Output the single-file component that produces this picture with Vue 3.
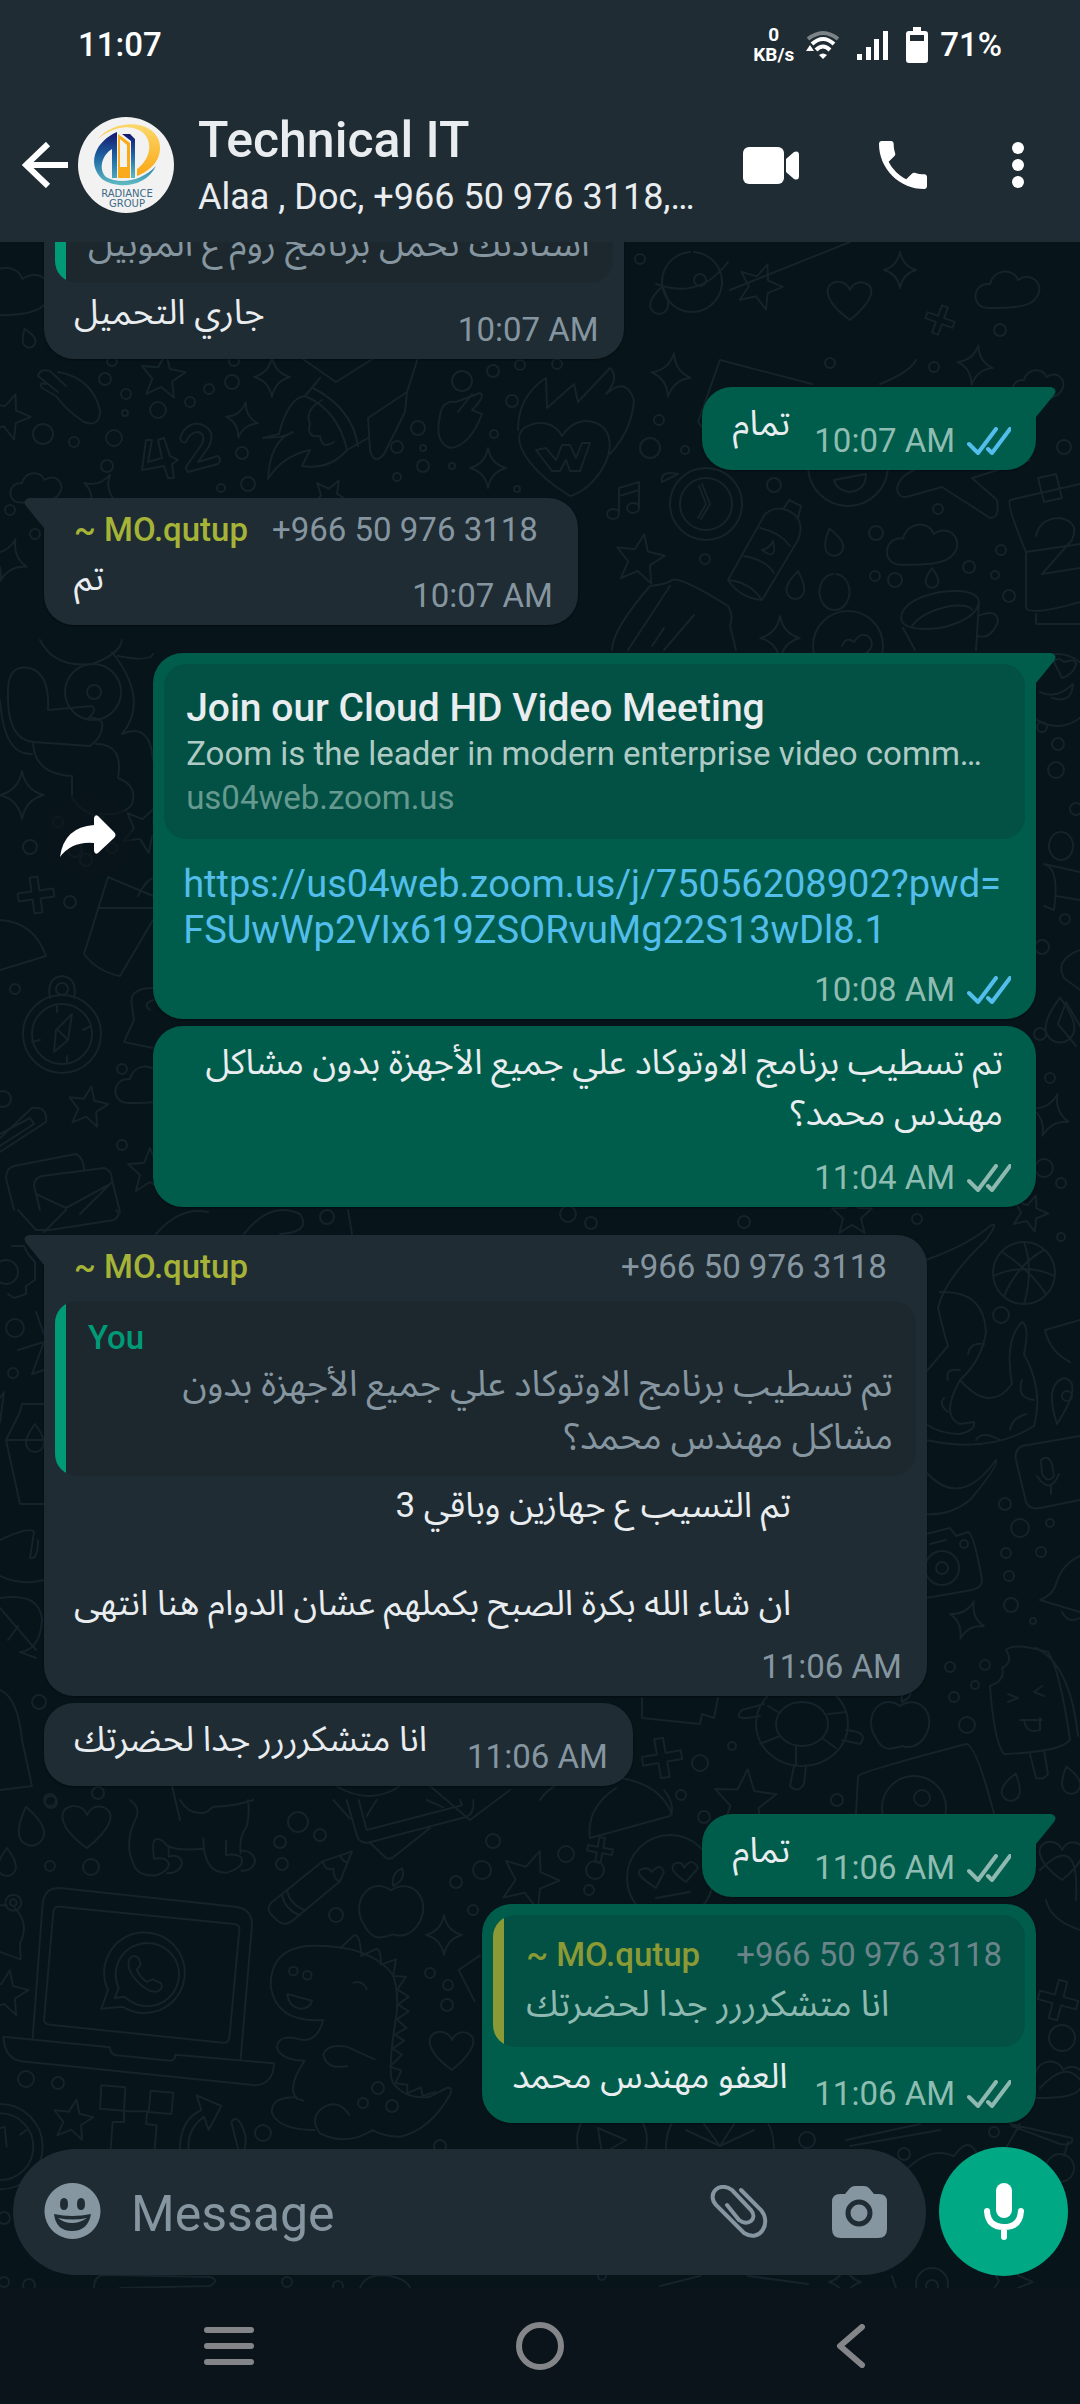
<!-- App.vue -->
<script setup>
import { ref } from 'vue'

const draft = ref('')

const contact = { name: '~ MO.qutup', phone: '+966 50 976 3118' }

const messages = [
  {
    id: 1,
    quote: { accent: 'green', lines: 'استاذنك تحمل برنامج زوم ع الموبيل' },
    text: ['جاري التحميل'],
    time: '10:07 AM'
  },
  { id: 2, out: true, first: true, text: ['تمام'], time: '10:07 AM', ticks: 'read' },
  { id: 3, first: true, sender: contact, text: ['تم'], time: '10:07 AM' },
  {
    id: 4,
    out: true,
    first: true,
    long: true,
    forward: true,
    preview: {
      title: 'Join our Cloud HD Video Meeting',
      description: 'Zoom is the leader in modern enterprise video comm…',
      host: 'us04web.zoom.us'
    },
    link: ['https://us04web.zoom.us/j/75056208902?pwd=', 'FSUwWp2VIx619ZSORvuMg22S13wDl8.1'],
    time: '10:08 AM',
    ticks: 'read'
  },
  {
    id: 5,
    out: true,
    long: true,
    text: ['تم تسطيب برنامج الاوتوكاد علي جميع الأجهزة بدون مشاكل مهندس محمد؟'],
    time: '11:04 AM',
    ticks: 'sent'
  },
  {
    id: 6,
    first: true,
    long: true,
    sender: contact,
    quote: {
      accent: 'green',
      title: 'You',
      lines: 'تم تسطيب برنامج الاوتوكاد علي جميع الأجهزة بدون مشاكل مهندس محمد؟'
    },
    text: ['تم التسيب ع جهازين وباقي 3', '', 'ان شاء الله بكرة الصبح بكملهم عشان الدوام هنا انتهى'],
    time: '11:06 AM'
  },
  { id: 7, text: ['انا متشكرررر جدا لحضرتك'], time: '11:06 AM' },
  { id: 8, out: true, first: true, text: ['تمام'], time: '11:06 AM', ticks: 'sent' },
  {
    id: 9,
    out: true,
    quote: { accent: 'lime', contact, lines: 'انا متشكرررر جدا لحضرتك' },
    text: ['العفو مهندس محمد'],
    time: '11:06 AM',
    ticks: 'sent'
  }
]

// Wallpaper: small repeated shapes, drawn around their own origin
const shapes = {
  star: 'M0-22 6-7 22-6 10 5 14 21 0 12-14 21-10 5-22-6-6-7Z',
  sparkle: 'M0-20Q3-4 18 0 3 4 0 20-3 4-18 0-3-4 0-20Z',
  heart: 'M0 20C-28 0-26-16-14-18-6-19-1-14 0-10 3-16 8-19 15-17 27-12 22 2 0 20Z',
  drop: 'M0-14C6-6 9 0 9 5A9 9 0 0 1-9 5C-9 0-6-6 0-14Z',
  plus: 'M-4-18h8v14h14v8H4v14h-8V4h-14v-8h14Z',
  cloud: 'M-22 18C-40 18-38-8-20-6-16-22 4-22 8-10 22-20 36-4 26 8 20 18-2 18-22 18Z',
  note: 'M-6 14V-12L14-18V8M-6-4 14-10M-6 14a6 5 0 1 1-6-5q4 0 6 2M14 8a6 5 0 1 1-6-5q4 0 6 2',
  apple: 'M0-16C-20-30-38-4-24 16-16 32-6 26 2 24 18 30 34 10 28-8 22-22 8-22 0-16ZM2-20Q0-32 10-36 14-26 2-20Z'
}

const doodles = [
  ['cloud', 12, 292, 1.3, 0], ['drop', 28, 338, 0.7, -20], ['star', 163, 375, 1, 8], ['sparkle', 272, 377, 1, 0],
  ['sparkle', 242, 420, 0.9, 12], ['sparkle', 488, 468, 1, 0], ['star', 8, 415, 1, 20], ['cloud', 38, 488, 0.8, 0],
  ['sparkle', 100, 492, 1, 30], ['star', 330, 496, 0.8, 30], ['note', 625, 500, 1, 0], ['star', 640, 558, 1.1, 10],
  ['sparkle', 671, 375, 1.1, 8], ['drop', 833, 542, 1, -15], ['drop', 796, 585, 1, 8], ['drop', 932, 578, 0.7, 0],
  ['cloud', 925, 545, 1.1, 0], ['sparkle', 780, 638, 1.1, 0], ['sparkle', 975, 365, 1, 10], ['cloud', 1040, 385, 0.8, 0],
  ['sparkle', 8, 560, 1.1, 20], ['heart', 850, 300, 1, 0], ['star', 760, 285, 1, 20],
  ['sparkle', 900, 270, 0.9, 0], ['cloud', 1010, 290, 1, 0], ['drop', 660, 300, 1, 10], ['plus', 940, 320, 0.8, 20],
  ['sparkle', 22, 795, 1.2, 0], ['plus', 36, 895, 1, -8], ['star', 88, 1106, 0.9, 10], ['star', 150, 1170, 1, 0],
  ['star', 145, 828, 1, 25], ['cloud', 150, 1085, 1, 0], ['sparkle', 1050, 1115, 1.1, 20], ['drop', 1060, 1020, 1.6, 0],
  ['sparkle', 967, 1620, 1, 20], ['drop', 1012, 1787, 1, 15], ['drop', 1070, 1780, 1, -15], ['plus', 662, 1758, 1.1, -10],
  ['star', 745, 1800, 1.4, 5], ['apple', 900, 1722, 1, 0], ['star', 852, 1214, 0.9, 0], ['star', 1030, 1212, 0.8, 20],
  ['heart', 1062, 1860, 1, 0], ['plus', 1058, 2000, 1.1, 15], ['cloud', 1055, 2080, 1, 0], ['star', 530, 1878, 1.3, 20],
  ['sparkle', 444, 1935, 1, 0], ['heart', 87, 1826, 1.1, 0], ['drop', 30, 1826, 1.4, -12], ['drop', 7, 1862, 1, 0],
  ['apple', 391, 1908, 1.1, 0], ['heart', 452, 2050, 1, 0], ['star', 73, 2119, 0.9, 10], ['star', 6, 1992, 1, 10],
  ['drop', 35, 1438, 1, 0], ['plus', 600, 1850, 0.7, 10], ['sparkle', 845, 2282, 0.9, 0], ['star', 1010, 2280, 1, 20]
]

const dots = [
  [105, 379, 6], [126, 394, 5], [158, 410, 8], [190, 402, 5], [209, 389, 5], [232, 382, 7], [125, 413, 3], [43, 434, 10],
  [74, 442, 5], [114, 438, 8], [107, 466, 6], [242, 453, 6], [248, 484, 7], [221, 488, 4], [112, 361, 5], [234, 361, 5],
  [462, 381, 10], [493, 371, 6], [520, 365, 5], [557, 364, 5], [512, 401, 6], [418, 428, 7], [397, 447, 6], [423, 448, 3],
  [423, 466, 6], [452, 466, 3], [397, 477, 4], [494, 434, 4], [517, 489, 3], [659, 420, 5], [650, 448, 10], [685, 450, 4],
  [774, 485, 7], [876, 533, 7], [1001, 550, 5], [969, 567, 6], [895, 580, 7], [875, 576, 5], [995, 575, 4], [1009, 596, 6],
  [705, 559, 5], [938, 509, 5], [1064, 447, 7], [640, 259, 5], [830, 363, 5], [934, 367, 5], [700, 280, 6], [1000, 330, 6],
  [35, 534, 5], [10, 510, 5], [30, 847, 7], [58, 822, 5], [75, 850, 7], [112, 848, 5], [86, 860, 6], [70, 902, 6],
  [15, 989, 5], [122, 1069, 5], [122, 1145, 5], [3, 1099, 8], [1042, 727, 5], [1058, 744, 6], [1056, 770, 8], [1076, 809, 6],
  [1065, 919, 5], [1042, 947, 7], [1040, 1034, 6], [1050, 1078, 5], [1044, 1168, 9], [1061, 1183, 5], [15, 1328, 9], [13, 1373, 5],
  [39, 1702, 7], [50, 1800, 6], [98, 1793, 6], [327, 1217, 7], [568, 1214, 8], [591, 1223, 6], [744, 1222, 6], [917, 1219, 5],
  [1001, 1315, 8], [1005, 1504, 6], [1020, 1528, 9], [1050, 1523, 4], [1006, 1553, 5], [1041, 1552, 5], [1009, 1576, 5],
  [1011, 1605, 7], [1033, 1621, 3], [950, 1667, 5], [985, 1665, 5], [975, 1685, 4], [954, 1697, 5], [967, 1725, 8], [732, 1746, 4],
  [700, 1763, 8], [681, 1795, 5], [837, 1800, 6], [1061, 1237, 4], [493, 1841, 7], [566, 1854, 8], [482, 1870, 9], [456, 1882, 6],
  [595, 1870, 9], [589, 1890, 5], [473, 1910, 5], [704, 1817, 6], [448, 1985, 5], [447, 2005, 6], [298, 1822, 10], [280, 1842, 6],
  [320, 1835, 6], [282, 1864, 6], [336, 1915, 7], [50, 1866, 5], [91, 1867, 8], [51, 1802, 6], [26, 2079, 8], [58, 2083, 6],
  [263, 2133, 8], [430, 1973, 5], [378, 2088, 6], [363, 2103, 5], [392, 2106, 6], [1062, 2038, 13], [807, 2140, 8], [904, 2154, 6],
  [994, 2132, 5], [4, 2218, 6], [4, 2282, 5], [29, 2285, 6], [287, 2282, 5], [338, 2286, 5], [440, 2146, 6], [602, 2276, 4]
]
</script>

<template>
  <div class="screen">
    <header class="top">
      <div class="status">
        <span class="clock">11:07</span>
        <div class="status-icons">
          <span class="rate">0<br>KB/s</span>
          <svg width="34" height="30" viewBox="0 0 34 30" fill="none" stroke="#fff" stroke-width="4">
            <path d="M2 9Q17-3 32 9" stroke="#7b8388" />
            <path d="M6 14Q17 4 28 14" />
            <path d="M10 20Q17 13 24 20" />
            <path d="M17 29 13 25Q17 22 21 25ZM0 21 4 15 8 21Z" fill="#fff" stroke="none" />
          </svg>
          <svg class="signal" width="32" height="29" viewBox="0 0 32 29" fill="#fff">
            <path d="M0 23h5v6H0ZM9 16h5v13H9ZM17 8h5v21h-5ZM26 0h5v29h-5Z" />
          </svg>
          <svg class="battery" width="22" height="36" viewBox="0 0 22 36" fill="#fff" fill-rule="evenodd">
            <path d="M7 0h8v4h4q3 0 3 3v26q0 3-3 3H3q-3 0-3-3V7q0-3 3-3h4ZM4 8v6h14V8Z" />
          </svg>
          <span class="clock">71%</span>
        </div>
      </div>
      <div class="toolbar">
        <button class="icon-btn" aria-label="Back">
          <svg width="46" height="46" viewBox="0 0 46 46" fill="none" stroke="#fff" stroke-width="6">
            <path d="M46 23H5M26 2 4 23 26 44" />
          </svg>
        </button>
        <svg class="avatar" width="96" height="96" viewBox="0 0 96 96">
          <defs>
            <linearGradient id="blue" x1="0" y1="0" x2="0" y2="1">
              <stop offset="0" stop-color="#14166e" />
              <stop offset="0.5" stop-color="#1f6aa5" />
              <stop offset="1" stop-color="#5fbcc2" />
            </linearGradient>
            <linearGradient id="gold" x1="0" y1="0" x2="0" y2="1">
              <stop offset="0" stop-color="#fbd86a" />
              <stop offset="1" stop-color="#fba714" />
            </linearGradient>
          </defs>
          <circle cx="48" cy="48" r="48" fill="#f2f2f2" />
          <path d="M20 22C36 2 74 2 81 24 86 42 72 54 59 59V52C70 44 75 30 68 19 58 6 36 8 20 22Z" fill="url(#gold)" />
          <path d="M39 15 39 61H34V32C24 38 20 52 28 60 42 68 64 64 78 49 68 70 40 73 24 62 8 46 18 24 39 15Z" fill="url(#blue)" />
          <path d="M44 17 52 17 57 22V61H53V24Z" fill="url(#blue)" />
          <path d="M40 17 52 26V61H40ZM42 22V50H49V28Z" fill="#f9ab1c" fill-rule="evenodd" />
          <text x="49" y="80" text-anchor="middle" class="logo-text">RADIANCE</text>
          <text x="49" y="90" text-anchor="middle" class="logo-text">GROUP</text>
        </svg>
        <div class="titles">
          <h1>Technical IT</h1>
          <p>Alaa , Doc, +966 50 976 3118,…</p>
        </div>
        <button class="icon-btn video" aria-label="Video call">
          <svg width="56" height="37" viewBox="0 0 56 37" fill="#fff">
            <rect width="41" height="37" rx="6" />
            <path d="M43 12 51 5Q56 3 56 8V29Q56 34 51 32L43 25Z" />
          </svg>
        </button>
        <button class="icon-btn call" aria-label="Voice call">
          <svg width="48" height="48" viewBox="3 3 18 18" fill="#fff">
            <path d="M6.62 10.79c1.44 2.83 3.76 5.14 6.59 6.59l2.2-2.2c.27-.27.67-.36 1.02-.24 1.12.37 2.33.57 3.57.57.55 0 1 .45 1 1V20c0 .55-.45 1-1 1C10.6 21 3 13.4 3 4c0-.55.45-1 1-1h3.5c.55 0 1 .45 1 1 0 1.25.2 2.45.57 3.57.11.35.03.74-.25 1.02Z" />
          </svg>
        </button>
        <button class="icon-btn" aria-label="More options">
          <svg width="12" height="46" viewBox="0 0 12 46" fill="#fff">
            <circle cx="6" cy="6" r="6" /><circle cx="6" cy="23" r="6" /><circle cx="6" cy="40" r="6" />
          </svg>
        </button>
      </div>
    </header>

    <main class="chat">
      <svg class="wallpaper" viewBox="0 242 1080 2046" preserveAspectRatio="xMidYMin slice" aria-hidden="true">
        <path
          v-for="([kind, x, y, size, turn], i) in doodles"
          :key="kind + i"
          :d="shapes[kind]"
          :transform="`translate(${x} ${y}) rotate(${turn}) scale(${size})`"
        />
        <circle v-for="([x, y, r], i) in dots" :key="i" :cx="x" :cy="y" :r="r" />

        <!-- hand, number, rocket, second hand, burning heart -->
        <path d="M38 376 58 392M50 371 66 386M38 376Q40 368 50 371M58 372Q92 378 100 410 100 428 84 422 66 410 56 396L42 388M42 388Q38 382 46 384" />
        <path d="M146 440 142 470 164 466 168 478H174L172 464 178 460 170 456 164 438 158 440 162 458 148 462 152 440ZM180 438Q186 422 200 424 218 430 208 448L198 462 218 456Q222 460 218 464L188 472Q184 468 188 464L202 444Q206 434 198 432 190 432 186 442 182 444 180 438Z" />
        <path d="M455 242 407 392M300 357 336 382 390 348M320 378 305 396M313 388Q352 408 358 446M305 396Q338 410 347 450L368 438M305 396Q288 398 279 434L263 438Q284 438 293 432 270 440 268 479 282 456 310 450L302 466Q330 470 347 450M322 400Q304 410 310 424 306 438 320 436 322 450 334 442M368 418 407 392 405 412 384 454Q374 466 370 450Z" />
        <path d="M440 416Q442 400 456 402L480 393Q486 396 472 410L482 414Q470 446 450 448 434 442 440 416ZM458 412 472 394" />
        <path d="M518 430Q518 396 546 378L547 408 574 384 578 402 610 368Q620 378 606 394 626 376 634 400 632 430 610 454M570 496C528 470 510 440 524 428 540 418 556 424 562 436 572 420 590 416 604 428 622 450 594 490 570 496ZM536 450 552 471H560L566 460 570 471H580L590 443H582L576 458 570 445H562L556 460 546 448Z" />
        <!-- planet, moon and paper at the top -->
        <path d="M690 252a30 30 0 1 0 4 0M656 284Q700 300 728 262M730 290 850 242M812 384 720 360 698 422 712 440M880 384Q910 372 916 360" />
        <!-- wall clock, smileys, plane, bottle -->
        <circle cx="706" cy="504" r="36" /><circle cx="706" cy="504" r="26" />
        <path d="M699 486 706 504 698 518M702 484 710 504 701 519M662 482Q660 470 678 474Z" />
        <path d="M728 580 765 514Q780 502 796 516 804 526 798 540L762 600Q740 598 728 580ZM784 508 789 500 801 506 798 518M760 528Q780 532 790 546M744 556Q766 560 774 573M728 580Q750 582 762 600M762 550Q770 548 773 541 778 562 762 550Z" />
        <circle cx="848" cy="466" r="40" />
        <path d="M834 480 866 474Q866 490 850 492 836 490 834 480M897 488Q900 474 920 468M897 488Q898 500 910 496L942 487 990 518Q1000 518 997 500L972 478 1030 460" />
        <circle cx="848" cy="646" r="35" />
        <path d="M842 646Q846 636 854 642 862 630 870 638 876 648 862 656M833 574a15 18 0 1 0 3 0" />
        <path d="M901 618Q902 600 940 592 978 588 979 602 976 620 940 628 902 632 901 618ZM912 626Q922 612 950 606 970 604 972 610M903 628 915 650M979 602 976 650M978 616Q998 608 998 622 990 640 978 636" />
        <path d="M1010 500 1080 484M1010 500Q1006 504 1026 552V608Q1032 616 1080 602M1026 552 1080 544M1038 478l18-4 6 24-18 4ZM1036 536Q1040 518 1060 518 1080 522 1072 540L1042 574 1080 568M1036 614V624H1080" />
        <path d="M612 650Q612 630 650 586 668 584 672 580 680 576 728 606 734 616 730 626L736 650M628 650 670 586M652 646 664 628M664 650 694 615" />
        <!-- left edge, beside the link message -->
        <path d="M40 640Q54 668 92 664 120 654 122 640M30 668Q8 664 8 690 6 740 34 742L90 746Q104 736 102 722 94 716 88 718 98 710 92 706L48 710Q50 674 30 668M0 700Q4 756 32 754M33 742Q34 774 72 776V798Q80 812 104 818M96 744Q124 744 118 778 138 786 132 804 124 816 100 814M118 656Q150 662 153 654M112 652Q150 700 122 734 150 722 153 760" />
        <circle cx="93" cy="692" r="28" /><circle cx="94" cy="692" r="7" />
        <path d="M108 877 153 896M108 877 84 954Q98 972 120 976L153 920M98 908H153M138 896Q146 880 153 878" />
        <path d="M0 920Q34 922 46 956L0 970" />
        <circle cx="62" cy="1034" r="39" /><circle cx="62" cy="1034" r="30" /><circle cx="62" cy="989" r="6" />
        <path d="M50 998Q46 978 62 976 78 978 74 998M72 1014 56 1030 54 1052 68 1040ZM72 1014 68 1040 58 1030M57 1006V1012M67 1056V1062M32 1042 40 1040M83 1030 91 1026" />
        <path d="M153 988Q128 988 132 1006L134 1020 124 1042 153 1048M153 1000Q142 1004 150 1010M0 1138 32 1108Q48 1106 46 1122L0 1152M0 1134 30 1118 34 1124 0 1146" />
        <path d="M14 1210 6 1178Q6 1168 14 1166L76 1154Q84 1158 84 1170M40 1210 34 1186Q34 1178 42 1176L104 1168Q112 1170 112 1180L120 1212M36 1194 66 1208 110 1184M112 1182 80 1214" />
        <!-- right edge of the conversation -->
        <circle cx="1057" cy="690" r="36" />
        <path d="M1040 692Q1056 700 1073 684 1072 704 1052 698M1054 662Q1058 656 1064 662 1076 658 1076 664 1074 674 1062 678ZM1060 832a12 14 0 1 0 2 0M1044 864Q1060 868 1054 910L1044 906M1044 864 1080 872M1056 896 1080 900M1080 950Q1054 960 1064 978L1080 990M1066 1002 1080 1026M1066 1002 1058 1024 1076 1046" />
        <circle cx="1024" cy="1273" r="31" />
        <path d="M1002 1252Q1030 1270 1046 1294M1044 1250Q1018 1264 1004 1296M1024 1242Q1034 1270 1024 1304M993 1276Q1026 1262 1054 1276" />
        <path d="M926 1260Q970 1244 990 1226 1000 1220 986 1240 944 1280 938 1308 944 1334 948 1346L926 1372M940 1292Q984 1290 986 1332 982 1360 960 1380 990 1414 1012 1384 1004 1340 1022 1322 1030 1326 1024 1354 1044 1390 1034 1426 990 1454 926 1440M960 1380Q940 1416 960 1424L974 1422Q976 1430 960 1434 940 1434 926 1424M926 1472Q960 1510 996 1460 1000 1464 970 1500 950 1516 926 1514M948 1380Q944 1368 960 1370M968 1354Q970 1342 984 1344M944 1398Q938 1404 948 1412M976 1440Q982 1430 1000 1440M1010 1430Q1012 1418 1026 1414M1022 1380Q1016 1398 1034 1400" />
        <path d="M1045 1330 1080 1320M1045 1330Q1050 1352 1070 1362M1057 1424Q1044 1384 1064 1378 1084 1382 1057 1424" /><circle cx="1067" cy="1396" r="5" />
        <path d="M1080 1436 1022 1446Q1014 1450 1016 1460L1026 1502Q1030 1510 1040 1508L1080 1500M1041 1460Q1048 1454 1052 1464L1054 1476Q1048 1484 1042 1474ZM1037 1476Q1050 1496 1059 1474M1051 1486V1494" />
        <path d="M926 1534 950 1528 956 1536 968 1532Q974 1534 982 1580 982 1588 972 1590L926 1598M930 1544 946 1540" /><circle cx="942" cy="1568" r="17" /><circle cx="942" cy="1568" r="6" /><circle cx="964" cy="1544" r="4" />
        <path d="M1080 1556Q1062 1564 1056 1584 1054 1594 1040 1600L1080 1612M1062 1612Q1068 1624 1080 1618" />
        <path d="M1006 1650Q1014 1642 1048 1652 1060 1670 1070 1740 1060 1752 1004 1754 994 1742 990 1686 1006 1680 1002 1668 1014 1662 1006 1650M1036 1648Q1070 1664 1078 1736M1008 1694 1018 1698 1008 1702M1042 1686 1034 1692 1044 1696M1020 1720H1042M1024 1720Q1026 1734 1040 1730V1718M1030 1754 1036 1778Q1044 1780 1048 1774L1044 1750" />
        <ellipse cx="802" cy="1724" rx="46" ry="42" /><ellipse cx="802" cy="1724" rx="26" ry="22" />
        <path d="M768 1706 778 1712M760 1744 780 1736M796 1766V1746M836 1748 822 1738M846 1712 828 1714M760 1716Q730 1722 742 1710L764 1704M794 1766 790 1786Q798 1794 804 1784L806 1766M846 1730Q870 1732 860 1744L842 1740" />
        <path d="M642 1698V1718L700 1724 702 1714 714 1718 718 1698M856 1814 858 1776Q860 1772 966 1744 976 1744 994 1814" />
        <circle cx="914" cy="1808" r="32" /><circle cx="922" cy="1798" r="8" />
        <!-- left edge, lower half -->
        <circle cx="6" cy="1272" r="12" />
        <path d="M12 1246 24 1246 28 1254 35 1262 35 1280 26 1286 26 1294 14 1298 8 1294M18 1210 36 1230 50 1230 114 1220Q122 1214 116 1210M44 1232 66 1210M36 1312 44 1334M18 1350 44 1342 32 1374 44 1370M0 1398 4 1392 0 1422M44 1404H22L20 1412 6 1440 20 1504 44 1504M6 1440H44M0 1540Q30 1526 34 1532L30 1558Q38 1560 38 1540M0 1576Q20 1586 44 1580M0 1598Q40 1592 42 1620 40 1650 20 1652L36 1658M0 1608 36 1650M8 1640 18 1626M0 1690Q18 1698 22 1740L32 1786 0 1790" />
        <!-- small drawings under the message columns -->
        <path d="M156 1234Q180 1206 208 1212M244 1234Q270 1200 300 1214 312 1232 280 1234M352 1234 348 1210M172 1786 180 1820M540 1800Q560 1770 620 1778 660 1784 672 1814M336 1786Q370 1806 400 1786M430 1786 470 1820 510 1790" />

        <g transform="translate(0 1800) scale(0.333333)">
          <!-- cow legs -->
          <path d="M390 0Q420 20 410 50 370 130 400 190 410 230 470 226 510 210 506 190 500 170 462 176 456 130 464 120 480 110 500 136 530 154 610 146M506 140V170Q540 160 546 190 540 220 500 220M610 115Q610 220 680 218 740 200 722 170 700 160 678 166V122M722 160Q716 110 740 80 750 40 744 0M722 152Q760 150 766 184 756 214 724 212M540 0Q570 50 620 36L640 20Q700 20 760 0" />
          <path d="M1040 0 1072 110Q1080 130 1104 128L1400 50Q1424 40 1420 0M1076 0 1100 90 1386 16 1380 0M1110 128 1156 172Q1166 180 1180 172L1290 84M1100 48 1130 0M1280 0 1330 22M1000 0 1050 56" />
          <!-- pencil -->
          <path d="M968 184 1056 154 1020 244 880 360Q850 386 820 350 796 330 812 310ZM968 184Q976 214 1000 206 1000 240 1020 244M1020 166Q1030 190 1044 184M862 272Q866 310 916 332M846 286Q856 330 900 346" />
          <!-- laptop -->
          <path d="M98 714 128 310Q134 262 180 264L706 320Q756 326 756 376L722 776M132 660 160 336Q162 318 180 320L704 372Q720 374 718 390L688 714Q684 730 668 728L150 674Q132 672 132 660ZM10 710 330 742Q330 764 350 766L510 782Q526 780 526 764L822 790Q820 852 766 856L64 784Q14 776 10 710Z" />
          <path d="M304 626 324 570A121 121 0 1 1 368 620ZM344 594 356 564A95 95 0 1 1 374 590ZM388 478Q400 460 416 474L422 494 410 510Q420 530 440 546L458 538 484 550Q490 564 474 574 450 580 420 552 376 510 388 478Z" />
          <!-- dinosaur -->
          <path d="M970 660Q830 670 812 560 810 450 920 438 1100 430 1176 520 1196 560 1190 640 1160 820 1180 850 1220 900 1290 890L1340 864Q1360 860 1350 884 1290 990 1200 1010 1150 1010 1118 990 1040 1040 960 1000 930 960 960 930 1010 890 1048 944M970 660Q950 730 900 718 840 700 830 740 840 780 914 782 860 860 890 896L910 902M890 892Q810 890 816 940 840 990 944 990M862 582 936 602Q930 626 900 626 866 620 862 582ZM1060 548Q1090 540 1100 568M1124 778 1040 740Q980 730 970 764 980 810 1042 798" />
          <path d="M1022 444 1062 406Q1080 400 1084 468L1130 446Q1144 450 1142 494L1188 478 1180 528 1218 530 1192 568 1226 590 1194 614 1226 634 1190 658 1220 684 1184 704 1212 722 1178 746 1206 764 1170 800 1204 812 1186 850 1222 854 1222 880 1262 862 1268 888 1306 876" />
          <circle cx="880" cy="513" r="13" /><circle cx="922" cy="526" r="13" />
          <!-- bell, compass, pixel figure, arrow -->
          <path d="M0 316H20M44 324Q90 370 60 430L62 478 0 456M304 856 376 862 372 932 300 926ZM452 872 520 878 514 942 446 936ZM372 934H442L438 972 470 976 464 1046M372 934V966H338L332 1046M590 886 664 918 626 990 612 950Q560 990 566 1046M590 886 604 930Q540 960 540 1046M694 966Q706 946 722 970 744 1010 734 1046M694 966 714 1046" />
          <circle cx="40" cy="308" r="24" /><circle cx="40" cy="308" r="10" />
          <circle cx="0" cy="1040" r="128" /><circle cx="0" cy="1040" r="100" />
          <path d="M0 985 14 980 20 1040M60 1004 80 990M1440 466 1376 510 1424 604" />
        </g>

        <circle cx="670" cy="1878" r="43" />
        <path d="M656 1888Q634 1874 640 1870 648 1866 652 1872 660 1862 664 1872ZM686 1882Q668 1870 674 1864 682 1860 684 1868 692 1856 698 1868ZM656 1898 690 1892M590 1838Q586 1808 616 1788M590 1838 670 1816Q676 1806 664 1790" />
        <circle cx="612" cy="2140" r="35" /><circle cx="720" cy="2148" r="54" />
        <path d="M598 2128 626 2140 602 2154ZM720 2146 704 2124M720 2146 734 2124M720 2146 686 2130M720 2146 754 2130M846 2140 920 2124M850 2146 940 2130M1010 2124 1072 2138Q1074 2146 1060 2144L1012 2126M1020 2124 1006 2148M1068 2142 1064 2156M906 2170Q930 2146 954 2156 968 2136 976 2152" />
        <path d="M94 2288Q94 2276 104 2275L210 2277Q220 2280 210 2286L120 2288M360 2288Q366 2272 390 2276 408 2280 410 2288M660 2286 700 2276M748 2276 808 2284M892 2276 896 2288M1040 1870Q1080 1830 1076 1900M1046 1900Q1050 1920 1080 1930M1040 2088Q1066 2060 1080 2080" />
        <circle cx="1060" cy="2168" r="14" /><circle cx="932" cy="2284" r="16" /><circle cx="932" cy="2286" r="6" />
      </svg>

      <div class="messages">
        <div
          v-for="msg in messages"
          :key="msg.id"
          class="row"
          :class="{ out: msg.out, first: msg.first }"
        >
          <button v-if="msg.forward" class="forward" aria-label="Forward">
            <svg width="56" height="42" viewBox="0 0 56 42" fill="#fff">
              <path d="M0 42Q4 12 34 10V3Q35-1 38 1L54 17Q57 20 54 23L38 38Q35 40 34 36V28Q12 26 0 42Z" />
            </svg>
          </button>
          <article class="bubble">
            <svg v-if="msg.first" class="tail" width="20" height="30" viewBox="0 0 20 30">
              <path d="M0 0H15Q22 2 18 8L0 30Z" fill="currentColor" />
            </svg>
            <div v-if="msg.sender" class="sender" :class="{ tall: msg.quote }">
              <b>{{ msg.sender.name }}</b>
              <span>{{ msg.sender.phone }}</span>
            </div>
            <blockquote v-if="msg.quote" class="quote" :class="msg.quote.accent">
              <div v-if="msg.quote.title" class="quote-title">{{ msg.quote.title }}</div>
              <div v-if="msg.quote.contact" class="quote-contact">
                <b>{{ msg.quote.contact.name }}</b>
                <span>{{ msg.quote.contact.phone }}</span>
              </div>
              <p dir="rtl">{{ msg.quote.lines }}</p>
            </blockquote>
            <div v-if="msg.preview" class="preview">
              <h2>{{ msg.preview.title }}</h2>
              <p>{{ msg.preview.description }}</p>
              <small>{{ msg.preview.host }}</small>
            </div>
            <div class="body" :class="{ long: msg.long, plain: !msg.sender && !msg.quote && !msg.link }">
              <a v-if="msg.link" class="link" :href="msg.link.join('')">{{ msg.link[0] }}<wbr>{{ msg.link[1] }}</a>
              <div v-else class="text" dir="rtl">
                <p v-for="(line, i) in msg.text" :key="i">{{ line }}</p>
              </div>
              <div class="meta">
                <time>{{ msg.time }}</time>
                <svg v-if="msg.ticks" class="ticks" :class="msg.ticks" width="44" height="28" viewBox="0 0 44 28">
                  <path d="M2 17 11 26 29 2M21 22 25 26 43 2" />
                </svg>
              </div>
            </div>
          </article>
        </div>
      </div>

      <form class="composer" @submit.prevent>
        <div class="field">
          <button type="button" class="icon-btn" aria-label="Emoji">
            <svg width="57" height="57" viewBox="0 0 57 57" fill="#8696a0" fill-rule="evenodd">
              <path d="M28 0a28 28 0 1 0 1 0ZM20 15q4 0 4 6t-4 6-4-6 4-6ZM37 15q4 0 4 6t-4 6-4-6 4-6ZM10 31q18 4 37 0-3 17-19 17T10 31Zm4 4q6 5 14 5t15-5q-14 3-29 0Z" />
            </svg>
          </button>
          <input v-model="draft" type="text" placeholder="Message" aria-label="Message">
          <button type="button" class="icon-btn clip" aria-label="Attach">
            <svg width="58" height="54" viewBox="0 0 58 54" fill="none" stroke="#8696a0" stroke-width="4" stroke-linecap="round">
              <path d="M31 5 51 25C62 38 50 58 34 48L6 20C-4 8 10-4 22 5L41 25C48 34 38 42 29 35L17 20" />
            </svg>
          </button>
          <button type="button" class="icon-btn" aria-label="Camera">
            <svg width="55" height="52" viewBox="0 0 55 52" fill="#8696a0">
              <path d="M8 8H13L18 2Q20 0 23 0H32Q35 0 37 2L42 8H47Q55 8 55 16V43Q55 52 46 52H9Q0 52 0 43V16Q0 8 8 8Z" />
              <circle cx="27" cy="27" r="11" stroke="#1f2c34" stroke-width="5" />
            </svg>
          </button>
        </div>
        <button type="button" class="mic" aria-label="Record voice message">
          <svg width="40" height="57" viewBox="0 0 40 57" fill="none" stroke="#fff" stroke-width="6" stroke-linecap="round">
            <rect x="12" y="0" width="16" height="35" rx="8" fill="#fff" stroke="none" />
            <path d="M3 28Q4 44 20 44T37 28M20 44V54" />
          </svg>
        </button>
      </form>
    </main>

    <nav class="system-nav">
      <button class="icon-btn" aria-label="Recent apps">
        <svg width="50" height="38" viewBox="0 0 50 38" stroke="#838589" stroke-width="6" stroke-linecap="round">
          <path d="M3 3H47M3 19H47M3 35H47" />
        </svg>
      </button>
      <button class="icon-btn" aria-label="Home">
        <svg width="48" height="48" viewBox="0 0 48 48" fill="none" stroke="#838589" stroke-width="6">
          <circle cx="24" cy="24" r="21" />
        </svg>
      </button>
      <button class="icon-btn" aria-label="Go back">
        <svg width="30" height="44" viewBox="0 0 30 44" fill="none" stroke="#838589" stroke-width="6" stroke-linecap="round" stroke-linejoin="round">
          <path d="M26 3 4 22 26 41" />
        </svg>
      </button>
    </nav>
  </div>
</template>

<style>
body {
  margin: 0;
  background: #0b141a;
}
</style>

<style scoped>
.screen {
  height: 100vh;
  display: flex;
  flex-direction: column;
  font-family: Roboto, "Noto Sans Arabic", "DejaVu Sans", sans-serif;
  color: #e9edef;
}

h1,
h2,
p {
  margin: 0;
}

h1,
h2,
b {
  font-weight: 500;
}

svg {
  display: block;
}

button {
  padding: 0;
  border: 0;
  background: none;
  font: inherit;
  color: inherit;
  cursor: pointer;
}

.icon-btn {
  flex: none;
}

/* Header */
.top {
  flex: none;
  background: #1f2c34;
}

.status {
  height: 90px;
  padding: 0 78px;
  display: flex;
  align-items: center;
  justify-content: space-between;
}

.clock {
  font-size: 33px;
  font-weight: 500;
  line-height: 40px;
  color: #fff;
}

.status-icons {
  display: flex;
  align-items: center;
  gap: 12px;
}

.rate {
  font-size: 19px;
  font-weight: 700;
  line-height: 20px;
  text-align: center;
  color: #fff;
}

.signal,
.battery {
  margin-left: 5px;
}

.toolbar {
  height: 152px;
  box-sizing: border-box;
  padding: 0 56px 2px 22px;
  display: flex;
  align-items: center;
}

.avatar {
  flex: none;
  margin: 0 24px 0 10px;
}

.logo-text {
  font: 10px "DejaVu Sans", sans-serif;
  fill: #3f6a86;
  stroke: none;
}

.titles {
  flex: 1;
  min-width: 0;
  padding-top: 4px;
  white-space: nowrap;
}

.titles h1 {
  font-size: 50px;
  line-height: 60px;
}

.titles p {
  font-size: 36px;
  line-height: 54px;
}

.call {
  margin: 0 85px 0 80px;
}

/* Conversation */
.chat {
  flex: 1;
  min-height: 0;
  position: relative;
  display: flex;
  flex-direction: column;
  background: #07141a;
  overflow: hidden;
}

.wallpaper {
  position: absolute;
  inset: 0;
  width: 100%;
  height: 100%;
  fill: none;
  stroke: #15232a;
  stroke-width: 2;
  stroke-linecap: round;
  stroke-linejoin: round;
}

.wallpaper path,
.wallpaper circle {
  vector-effect: non-scaling-stroke;
}

.messages {
  flex: 1;
  min-height: 0;
  position: relative;
  overflow: hidden;
  display: flex;
  flex-direction: column;
  justify-content: flex-end;
  padding: 0 44px 24px;
}

.row {
  flex: none;
  display: flex;
  align-items: center;
  margin-top: 7px;
}

.row.first {
  margin-top: 28px;
}

.row.out {
  justify-content: flex-end;
}

.forward {
  flex: none;
  width: 88px;
  height: 88px;
  margin-right: 21px;
  border-radius: 50%;
  background: rgba(11, 20, 26, 0.6);
  display: grid;
  place-items: center;
}

.bubble {
  position: relative;
  box-sizing: border-box;
  max-width: 89%;
  border-radius: 30px;
  background: #1f2c34;
  box-shadow: 0 1px 2px rgba(0, 0, 0, 0.4);
}

.out .bubble {
  background: #005d4b;
}

.first .bubble {
  border-top-left-radius: 0;
}

.first.out .bubble {
  border-radius: 30px 0 30px 30px;
}

.tail {
  position: absolute;
  top: 0;
  right: 100%;
  color: #1f2c34;
  transform: scaleX(-1);
}

.out .tail {
  right: auto;
  left: 100%;
  color: #005d4b;
  transform: none;
}

.sender,
.quote-contact {
  display: flex;
  justify-content: space-between;
  gap: 24px;
  font-size: 33px;
  white-space: nowrap;
}

.sender {
  padding: 12px 40px 0 30px;
  height: 39px;
  line-height: 40px;
}

.sender.tall {
  height: 54px;
}

.sender b,
.quote-contact b {
  color: #a5b337;
}

.sender span {
  color: #8696a0;
}

.quote {
  --accent: #009a77;
  --fill: #1d282e;
  margin: 0 11px;
  padding: 17px 23px 12px 33px;
  border-radius: 22px;
  background: linear-gradient(to right, var(--accent) 11px, var(--fill) 11px);
  color: #8696a0;
}

.out .quote {
  --fill: #025144;
  color: #8fb9b0;
}

.quote.lime {
  --accent: #8b9a35;
  padding-bottom: 16px;
}

.bubble:has(> .preview),
.out .bubble:has(> .quote) {
  padding-top: 11px;
}

.quote p {
  width: fit-content;
  font-size: 36px;
  line-height: 53px;
}

.quote-title {
  font-size: 33px;
  font-weight: 500;
  line-height: 40px;
  color: #009a77;
}

.quote-contact {
  gap: 36px;
  line-height: 46px;
}

.quote-contact b {
  color: #8b9a35;
}

.quote-contact span {
  color: #6b848a;
}

.preview {
  margin: 0 11px;
  padding: 20px 22px 19px;
  border-radius: 22px;
  background: #025144;
}

.preview h2 {
  font-size: 39px;
  line-height: 48px;
}

.preview p {
  font-size: 33px;
  line-height: 44px;
  color: #b0cbc5;
  overflow: hidden;
  text-overflow: ellipsis;
  white-space: nowrap;
}

.preview small {
  display: block;
  font-size: 33px;
  line-height: 44px;
  color: #669990;
}

.body {
  display: flex;
  justify-content: space-between;
  align-items: flex-end;
  gap: 40px;
  padding: 0 25px 9px 30px;
}

.out .body {
  gap: 24px;
}

.body.plain {
  padding-top: 7px;
}

.text {
  padding: 4px 0 12px;
  font-size: 35px;
  line-height: 51px;
}

.text p {
  min-height: 47px;
}

.body.long,
.out .body.long {
  flex-direction: column;
  gap: 0;
}

.long .text {
  align-self: flex-start;
  padding: 4px 0 18px;
}

.out .long .text {
  padding-right: 8px;
  padding-bottom: 19px;
}

.link {
  align-self: flex-start;
  padding: 22px 0 17px;
  font-size: 38px;
  line-height: 46px;
  color: #53bdeb;
  text-decoration: none;
  overflow-wrap: anywhere;
}

.meta {
  flex: none;
  display: flex;
  align-items: center;
  gap: 12px;
  font-size: 33px;
  line-height: 40px;
  color: #8696a0;
  white-space: nowrap;
}

.out .meta {
  color: #8fbdb2;
}

.ticks {
  fill: none;
  stroke: #8fb9b0;
  stroke-width: 4;
  stroke-linecap: round;
  stroke-linejoin: round;
}

.ticks.read {
  stroke: #53bdeb;
}

/* Composer */
.composer {
  flex: none;
  position: relative;
  display: flex;
  align-items: center;
  gap: 13px;
  padding: 0 12px 12px 13px;
}

.field {
  flex: 1;
  min-width: 0;
  height: 126px;
  box-sizing: border-box;
  padding: 0 39px 0 31px;
  border-radius: 63px;
  background: #1f2c34;
  display: flex;
  align-items: center;
}

.field input {
  flex: 1;
  min-width: 0;
  margin: 0 24px 0 30px;
  padding: 4px 0 0;
  border: 0;
  outline: 0;
  background: none;
  font-family: inherit;
  font-size: 50px;
  line-height: 60px;
  color: #e9edef;
}

.field input::placeholder {
  color: #8696a0;
  opacity: 1;
}

.clip {
  margin-right: 64px;
}

.mic {
  flex: none;
  width: 129px;
  height: 129px;
  border-radius: 50%;
  background: #00a884;
  display: grid;
  place-items: center;
}

/* Android navigation */
.system-nav {
  flex: none;
  height: 116px;
  padding: 0 74px;
  background: #0b141a;
  display: grid;
  grid-template-columns: 1fr 1fr 1fr;
  place-items: center;
}
</style>
